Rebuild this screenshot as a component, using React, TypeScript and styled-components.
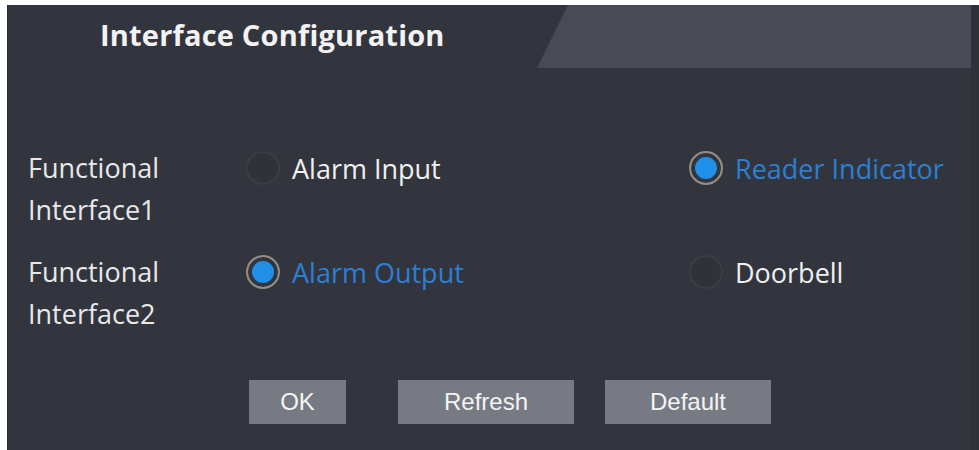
import styled, { createGlobalStyle } from "styled-components";

const GlobalStyle = createGlobalStyle`
	html, body {
		margin: 0;
		padding: 0;
		background: #ffffff;
	}
	body {
		font-family: "Open Sans", "Noto Sans", sans-serif;
	}
`;

const interfaces = [
	{ name: "Functional Interface1", options: [ { label: "Alarm Input", checked: false }, { label: "Reader Indicator", checked: true } ] },
	{ name: "Functional Interface2", options: [ { label: "Alarm Output", checked: true }, { label: "Doorbell", checked: false } ] },
];

const buttons = [
	{ label: "OK", width: 97, gap: 0 },
	{ label: "Refresh", width: 176, gap: 52 },
	{ label: "Default", width: 166, gap: 31 },
];

const Panel = styled.section`
	margin: 5px 0 0 7px;
	height: 445px;
	background: #33353e;
	border-left: 1px solid #2a2b31;
	border-right: 8px solid #2f3138;
	display: flex;
	flex-direction: column;
`;

const Header = styled.header`
	height: 63px;
	display: grid;
	grid-template-columns: 1fr;
`;

const HeaderTab = styled.div`
	grid-area: 1 / 1;
	background: #4a4a56;
	clip-path: polygon(560px 0, 100% 0, 100% 100%, 529px 100%);
`;

const Title = styled.h1`
	grid-area: 1 / 1;
	margin: 0;
	padding: 0 0 4px 92px;
	display: flex;
	align-items: center;
	color: #f2f2f2;
	font-size: 29px;
	font-weight: 700;
	letter-spacing: 0.2px;
`;

const Form = styled.div`
	padding: 79px 0 0 20px;
	display: flex;
	flex-direction: column;
	gap: 20px;
`;

const Row = styled.div`
	display: grid;
	grid-template-columns: 218px 443px 1fr;
	align-items: start;
`;

const Label = styled.div`
	color: #e8e8e8;
	font-size: 27px;
	line-height: 42px;
	width: 200px;
`;

const Option = styled.label<{ $checked: boolean }>`
	display: flex;
	align-items: center;
	gap: 12px;
	height: 42px;
	font-size: 27px;
	color: ${ ({ $checked }) => $checked ? "#2d7fd2" : "#f0f0f0" };
`;

const Radio = styled.span<{ $checked: boolean }>`
	box-sizing: border-box;
	width: 34px;
	height: 34px;
	flex: none;
	border-radius: 50%;
	border: 2px solid ${ ({ $checked }) => $checked ? "#9a8a7c" : "#3b3d46" };
	background: ${ ({ $checked }) => $checked ? "#1f8fe8" : "#30323a" };
	box-shadow: ${ ({ $checked }) => $checked ? "inset 0 0 0 4px #33353e" : "none" };
`;

const Buttons = styled.div`
	display: flex;
	padding: 45px 0 0 241px;
`;

const Button = styled.button<{ $width: number; $gap: number }>`
	width: ${ ({ $width }) => $width }px;
	margin-left: ${ ({ $gap }) => $gap }px;
	height: 44px;
	border: none;
	background: #777a82;
	color: #f4f4f4;
	font-family: "Liberation Sans", Arial, sans-serif;
	font-size: 24px;
	padding: 0;
`;

export default function App() {
	return(
		<>
			<GlobalStyle />
			<Panel>
				<Header>
					<HeaderTab />
					<Title>{ "Interface Configuration" }</Title>
				</Header>
				<Form>
					{ interfaces.map(row => (
						<Row key={ row.name }>
							<Label>{ row.name }</Label>
							{ row.options.map(option => (
								<Option key={ option.label } $checked={ option.checked }>
									<Radio $checked={ option.checked } />
									{ option.label }
								</Option>
							)) }
						</Row>
					)) }
				</Form>
				<Buttons>
					{ buttons.map(button => (
						<Button key={ button.label } $width={ button.width } $gap={ button.gap }>
							{ button.label }
						</Button>
					)) }
				</Buttons>
			</Panel>
		</>
	);
}
